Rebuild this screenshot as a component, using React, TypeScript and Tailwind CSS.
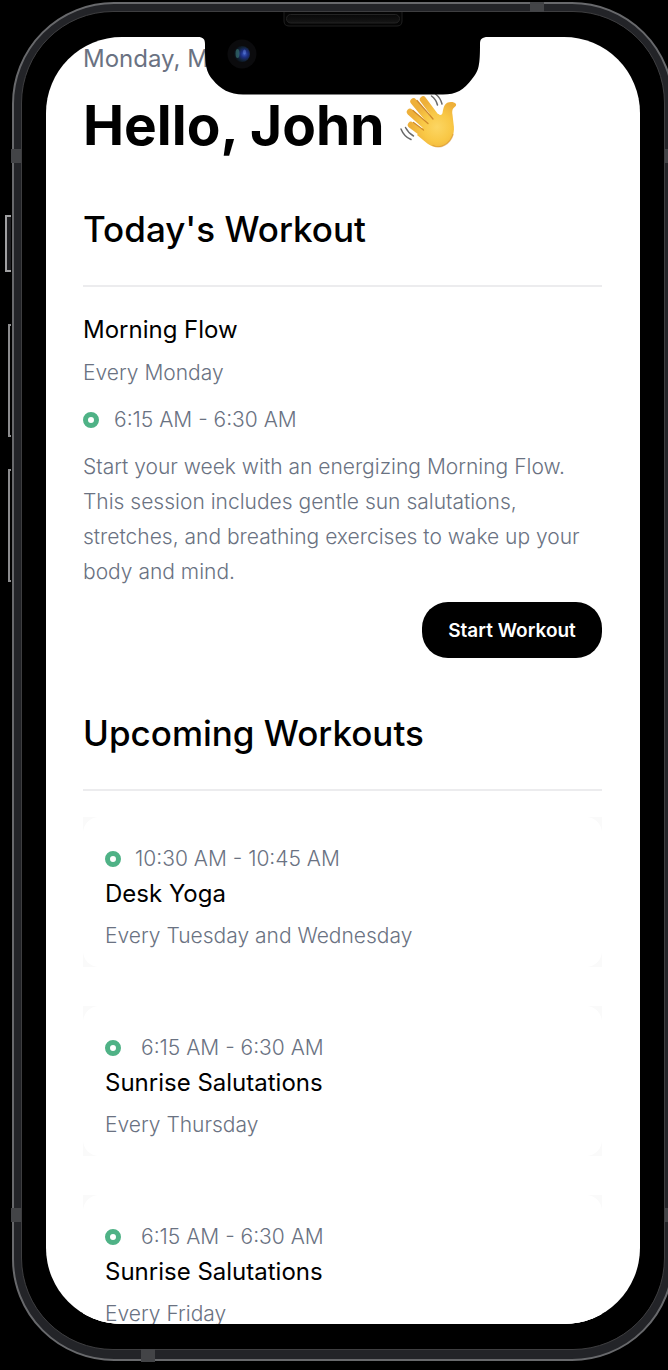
import React from "react";

type Workout = { time: string; title: string; days: string; gap: string };

const upcoming: Workout[] = [
  { time: "10:30 AM - 10:45 AM", title: "Desk Yoga", days: "Every Tuesday and Wednesday", gap: "gap-[14px]" },
  { time: "6:15 AM - 6:30 AM", title: "Sunrise Salutations", days: "Every Thursday", gap: "gap-5" },
  { time: "6:15 AM - 6:30 AM", title: "Sunrise Salutations", days: "Every Friday", gap: "gap-5" },
];

function Dot() {
  return <span aria-hidden="true" className="size-4 shrink-0 rounded-full border-5 border-[#4fb286] bg-white" />;
}

function WavingHand() {
  return (
    <svg viewBox="0 0 58 58" className="size-[58px] shrink-0 self-start" role="img" aria-label="Waving hand">
      <defs>
        <radialGradient id="palm" gradientUnits="userSpaceOnUse" cx="37" cy="34" r="26">
          <stop offset="0" stopColor="#fcd663" />
          <stop offset="0.55" stopColor="#f9c846" />
          <stop offset="1" stopColor="#eeb03a" />
        </radialGradient>
      </defs>
      <g fill="none" stroke="#6a6a6a" strokeWidth="1.5" strokeLinecap="round">
        <path d="M1 36c2 5 6 9 10 10.500" />
        <path d="M5.500 34.500c2 4 4.500 6.500 8 8.500" />
        <path d="M31.500 3c3.500 2.500 5 5 6 9" />
        <path d="M35.500 1c3.700 2.800 5.500 6 6.500 10" />
      </g>
      <g fill="none" stroke="url(#palm)" strokeWidth="6.400" strokeLinecap="round">
        <path d="M23 6.500L39 28" />
        <path d="M13.500 8.500L33 32" />
        <path d="M10 19L30 37" />
        <path d="M11 32L27 44" />
      </g>
      <path
        d="M30 20L38.500 21c1.300 1.700 3.500 1.300 4-.9.900-4 1-7.800 4.700-10.300 2.600-1.500 7.200-1.100 8.600 1 .800 1.200.200 2.400-1.100 3.100-2.500 1.500-2.700 4.600-2.200 7.800l1 8.800c1.500 8.600-.6 15.300-6.200 20-6 5-14 4.600-20 0L17 42L24 33L30 28Z"
        fill="url(#palm)"
      />
      <g fill="none" stroke="#d08a28" strokeWidth="1.300" strokeLinecap="round">
        <path d="M13.500 29.500l10 7.500" />
        <path d="M13 17.500l15 13" />
        <path d="M17 7.500l16 18.500" />
        <path d="M33 52.500c7 4 17.500-1.500 20-11" opacity=".5" />
      </g>
    </svg>
  );
}

function Notch() {
  return (
    <svg viewBox="0 0 290 96" className="absolute left-1/2 top-[-25px] w-[290px] -translate-x-1/2" aria-hidden="true">
      <defs>
        <radialGradient id="lens" cx="0.650" cy="0.500" r="0.600">
          <stop offset="0" stopColor="#3a5cc4" />
          <stop offset="0.350" stopColor="#1d2f83" />
          <stop offset="0.750" stopColor="#10202f" />
          <stop offset="1" stopColor="#0a1018" />
        </radialGradient>
        <linearGradient id="speaker" x1="0" y1="0" x2="0" y2="1">
          <stop offset="0" stopColor="#080808" />
          <stop offset="1" stopColor="#161616" />
        </linearGradient>
      </defs>
      <path
        d="M0 0H290V25C284 25 282 27 282 32C282 53 281 59 274 67C266 78 258 82.500 245 82.500H45C32 82.500 22 77 15 68C8 60 7 53 7 32C7 27 5 25 0 25Z"
        fill="#000"
      />
      <path d="M86 0V9Q86 14 91 14H199Q204 14 204 9V0" fill="#050505" stroke="#1f1f1f" />
      <rect x="88.500" y="2.500" width="113" height="8.500" rx="4.200" fill="url(#speaker)" stroke="#232323" />
      <circle cx="44" cy="42" r="14.500" fill="#0b0b0d" />
      <circle cx="44" cy="42" r="8" fill="url(#lens)" />
      <ellipse cx="39.500" cy="41.500" rx="2" ry="4.500" fill="#3c7c7a" opacity=".6" />
      <ellipse cx="46.500" cy="40" rx="1.500" ry="2.500" fill="#7492e8" opacity=".4" />
    </svg>
  );
}

function SectionTitle({ children }: { children: React.ReactNode }) {
  return (
    <h2 className="border-b-2 border-[#ececee] pb-8 text-[35px] leading-12 font-medium text-black">{children}</h2>
  );
}

function Hardware() {
  return (
    <div aria-hidden="true">
      <div className="absolute left-[-7px] top-[213px] h-[57px] w-[6px] border-2 border-r-0 border-[#a0a0a2] bg-[#1d1d20]" />
      <div className="absolute left-[-4px] top-[322px] h-[113px] w-[3px] border-2 border-r-0 border-[#8b8b8d]" />
      <div className="absolute left-[-4px] top-[467px] h-[113px] w-[3px] border-2 border-r-0 border-[#8b8b8d]" />
      <div className="absolute left-[-1px] top-[147px] h-[14px] w-[10px] bg-[#434447]" />
      <div className="absolute right-[-1px] top-[147px] h-[14px] w-[10px] bg-[#434447]" />
      <div className="absolute bottom-[139px] left-[-1px] h-[14px] w-[10px] bg-[#434447]" />
      <div className="absolute bottom-[139px] right-[-1px] h-[14px] w-[10px] bg-[#434447]" />
      <div className="absolute right-[130px] top-0 h-[10px] w-[14px] bg-[#434447]" />
      <div className="absolute bottom-[-1px] left-[129px] h-[13px] w-[14px] bg-[#434447]" />
    </div>
  );
}

export default function App() {
  return (
    <div className="flex h-screen overflow-hidden bg-black pt-[2px] pb-[9px] pl-3 font-['Inter','Open_Sans',sans-serif]">
      <div className="relative -mr-[6px] flex min-w-0 flex-1">
        <div className="flex min-w-0 flex-1 rounded-[102px] border-2 border-[#68696c] bg-[#232428] p-[7px] pb-[9px]">
          <div className="flex min-w-0 flex-1 rounded-[92px] border border-[#3e3e40] bg-black px-6 pt-[25px] pb-[25px]">
            <div className="relative min-w-0 flex-1">
              <main className="h-full overflow-hidden rounded-[76px] bg-white pt-1 pr-[38px] pl-[37px] text-[21px] leading-[35px] font-light text-gray-500">
                <p className="text-2xl leading-9 font-normal">Monday, Ma</p>
                <div className="mt-4 flex h-16 items-center gap-4">
                  <h1 className="text-[55px] leading-16 font-bold whitespace-nowrap text-black">Hello, John</h1>
                  <WavingHand />
                </div>

                <section className="mt-12">
                  <SectionTitle>Today's Workout</SectionTitle>
                  <h3 className="mt-[25px] text-2xl leading-9 font-normal text-black">Morning Flow</h3>
                  <p className="mt-[7px]">Every Monday</p>
                  <p className="mt-3 flex items-center gap-[15px]">
                    <Dot />
                    6:15 AM - 6:30 AM
                  </p>
                  <p className="mt-3">
                    Start your week with an energizing Morning Flow. This session includes gentle sun salutations,
                    stretches, and breathing exercises to wake up your body and mind.
                  </p>
                  <div className="mt-[13px] flex justify-end">
                    <button type="button" className="h-14 w-[180px] rounded-[26px] bg-black text-[19px] font-semibold text-white">
                      Start Workout
                    </button>
                  </div>
                </section>

                <section className="mt-[51px]">
                  <SectionTitle>Upcoming Workouts</SectionTitle>
                  <ul className="mt-[26px] flex flex-col gap-[39px]">
                    {upcoming.map((w, i) => (
                      <li key={i} className="bg-[#fafafa]">
                        <article className="rounded-2xl bg-white px-[22px] pt-[25px] pb-[14px] leading-[34px]">
                          <p className={`flex items-center ${w.gap}`}>
                            <Dot />
                            {w.time}
                          </p>
                          <h3 className="text-2xl leading-[35px] font-normal text-black">{w.title}</h3>
                          <p className="mt-2">{w.days}</p>
                        </article>
                      </li>
                    ))}
                  </ul>
                </section>
              </main>
              <Notch />
            </div>
          </div>
        </div>
        <Hardware />
      </div>
    </div>
  );
}
